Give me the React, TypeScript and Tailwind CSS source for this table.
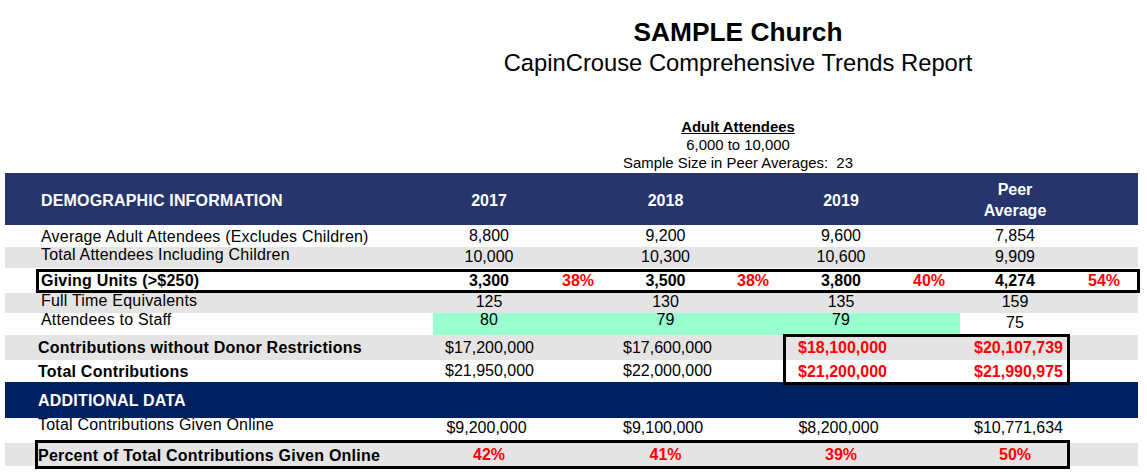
import React from "react";

type V = string | null | [string, string];

const W = [
  "w-[88px]",
  "w-[90px]",
  "w-[85px]",
  "w-[90px]",
  "w-[86px]",
  "w-[90px]",
  "w-[82px]",
  "w-[82px] pl-[14px]",
];

function Vals({ vals, off }: { vals: V[]; off: string }) {
  return (
    <>
      {vals.map((v, i) => {
        const text = Array.isArray(v) ? v[0] : v;
        const extra = Array.isArray(v) ? v[1] : "";
        return (
          <div
            key={i}
            className={`shrink-0 text-center whitespace-nowrap ${W[i]} ${off} ${extra}`}
          >
            {text}
          </div>
        );
      })}
    </>
  );
}

const RED = "text-[#ff0000] font-bold";
const RED_D = "text-[#ff0000] font-bold pr-[6px]";
const D = "pr-[5px]";

export default function App() {
  return (
    <div className="w-[1147px] h-[475px] overflow-hidden bg-white text-black font-['Liberation_Sans',Arial,sans-serif]">
      {/* Title */}
      <div className="ml-[330px] w-[816px] text-center pt-[17px]">
        <div className="text-[26.3px] leading-[30px] font-bold">SAMPLE Church</div>
        <div className="text-[23.75px] leading-[28px] mt-[2px]">
          CapinCrouse Comprehensive Trends Report
        </div>
      </div>

      {/* Peer group */}
      <div className="ml-[330px] w-[816px] text-center mt-[41px] text-[14.9px] leading-[18px]">
        <div className="font-bold underline">Adult Attendees</div>
        <div>6,000 to 10,000</div>
        <div className="whitespace-pre">Sample Size in Peer Averages:  23</div>
      </div>

      {/* Table */}
      <div className="ml-[5px] w-[1133px] mt-[1px] text-[16px] leading-[18px]">
        {/* Header band */}
        <div className="flex h-[52px] bg-[#26356c] text-white font-bold">
          <div className="w-[440px] shrink-0 pl-[36px] pt-[19px] tracking-[0.17px]">DEMOGRAPHIC INFORMATION</div>
          <div className="w-[88px] shrink-0 text-center pt-[19px]">2017</div>
          <div className="w-[90px] shrink-0" />
          <div className="w-[85px] shrink-0 text-center pt-[19px]">2018</div>
          <div className="w-[90px] shrink-0" />
          <div className="w-[86px] shrink-0 text-center pt-[19px]">2019</div>
          <div className="w-[90px] shrink-0" />
          <div className="w-[82px] shrink-0 text-center pt-[7px] leading-[20.5px] whitespace-nowrap">
            Peer
            <br />
            Average
          </div>
        </div>

        {/* Average Adult Attendees */}
        <div className="flex h-[22px] bg-white">
          <div className="w-[440px] shrink-0 pl-[36px] pt-[3px] whitespace-nowrap tracking-[0.2px]">
            Average Adult Attendees (Excludes Children)
          </div>
          <Vals off="pt-[2px]" vals={["8,800", null, "9,200", null, "9,600", null, "7,854", null]} />
        </div>

        {/* Total Attendees */}
        <div className="flex h-[21px] bg-[#e4e4e4]">
          <div className="w-[440px] shrink-0 pl-[36px] -mt-[1px] whitespace-nowrap tracking-[0.2px]">
            Total Attendees Including Children
          </div>
          <Vals off="pt-[1px]" vals={["10,000", null, "10,300", null, "10,600", null, "9,909", null]} />
        </div>

        {/* Giving Units */}
        <div className="mt-[1px] ml-[31px] w-[1104px] h-[24px] border-[3px] border-black flex font-bold">
          <div className="w-[406px] shrink-0 pl-[2px] whitespace-nowrap tracking-[0.2px]">Giving Units (&gt;$250)</div>
          <Vals
            off=""
            vals={[
              "3,300",
              ["38%", "text-[#ff0000]"],
              "3,500",
              ["38%", "text-[#ff0000]"],
              "3,800",
              ["40%", "text-[#ff0000]"],
              "4,274",
              ["54%", "text-[#ff0000]"],
            ]}
          />
        </div>

        {/* Full Time Equivalents */}
        <div className="flex h-[20px] bg-[#e4e4e4]">
          <div className="w-[440px] shrink-0 pl-[36px] -mt-[1px] whitespace-nowrap tracking-[0.2px]">
            Full Time Equivalents
          </div>
          <Vals off="" vals={["125", null, "130", null, "135", null, "159", null]} />
        </div>

        {/* Attendees to Staff */}
        <div className="flex h-[22px] bg-white">
          <div className="w-[428px] shrink-0 pl-[36px] -mt-[2px] whitespace-nowrap tracking-[0.2px]">
            Attendees to Staff
          </div>
          <div className="flex w-[527px] shrink-0 h-full bg-[#99ffcc]">
            <div className="w-[12px] shrink-0" />
            <div className="w-[88px] shrink-0 text-center -mt-[2px]">80</div>
            <div className="w-[90px] shrink-0" />
            <div className="w-[85px] shrink-0 text-center -mt-[2px]">79</div>
            <div className="w-[90px] shrink-0" />
            <div className="w-[86px] shrink-0 text-center -mt-[2px]">79</div>
            <div className="w-[76px] shrink-0" />
          </div>
          <div className="w-[14px] shrink-0" />
          <div className="w-[82px] shrink-0 text-center pt-[1px]">75</div>
        </div>

        {/* Contributions block */}
        <div className="relative">
          <div className="flex h-[25px] bg-[#e4e4e4]">
            <div className="w-[440px] shrink-0 pl-[33px] pt-[4px] font-bold whitespace-nowrap tracking-[0.23px]">
              Contributions without Donor Restrictions
            </div>
            <Vals
              off="pt-[4px]"
              vals={[
                ["$17,200,000", D],
                null,
                ["$17,600,000", D],
                null,
                ["$18,100,000", RED_D],
                null,
                ["$20,107,739", RED_D],
                null,
              ]}
            />
          </div>
          <div className="flex h-[22px] bg-white">
            <div className="w-[440px] shrink-0 pl-[33px] pt-[3px] font-bold whitespace-nowrap tracking-[0.23px]">
              Total Contributions
            </div>
            <Vals
              off="pt-[2px]"
              vals={[
                ["$21,950,000", D],
                null,
                ["$22,000,000", D],
                null,
                ["$21,200,000", RED_D + " pt-[3px]"],
                null,
                ["$21,990,975", RED_D + " pt-[3px]"],
                null,
              ]}
            />
          </div>
          <div className="absolute left-[778px] top-[-1px] w-[287px] h-[51px] border-[3px] border-black z-10 pointer-events-none" />
        </div>

        {/* Additional data band */}
        <div className="flex h-[36px] bg-[#002060] text-white font-bold">
          <div className="pl-[33px] pt-[10px] whitespace-nowrap tracking-[0.2px]">ADDITIONAL DATA</div>
        </div>

        {/* Total Contributions Given Online */}
        <div className="flex h-[22px] bg-white">
          <div className="w-[440px] shrink-0 pl-[33px] -mt-[2px] whitespace-nowrap tracking-[0.2px]">
            Total Contributions Given Online
          </div>
          <Vals
            off="pt-[1px]"
            vals={[
              ["$9,200,000", D],
              null,
              ["$9,100,000", D],
              null,
              ["$8,200,000", D],
              null,
              ["$10,771,634", D],
              null,
            ]}
          />
        </div>

        {/* Percent given online */}
        <div className="py-[3px] bg-[#e4e4e4] bg-clip-content">
          <div className="-my-[3px] ml-[30px] w-[1035px] h-[29px] border-[3px] border-black flex font-bold">
            <div className="w-[407px] shrink-0 pt-[4px] whitespace-nowrap tracking-[0.23px]">
              Percent of Total Contributions Given Online
            </div>
            <Vals
              off="pt-[3px]"
              vals={[
                ["42%", RED],
                null,
                ["41%", RED],
                null,
                ["39%", RED],
                null,
                ["50%", RED],
              ]}
            />
          </div>
        </div>
      </div>
    </div>
  );
}
